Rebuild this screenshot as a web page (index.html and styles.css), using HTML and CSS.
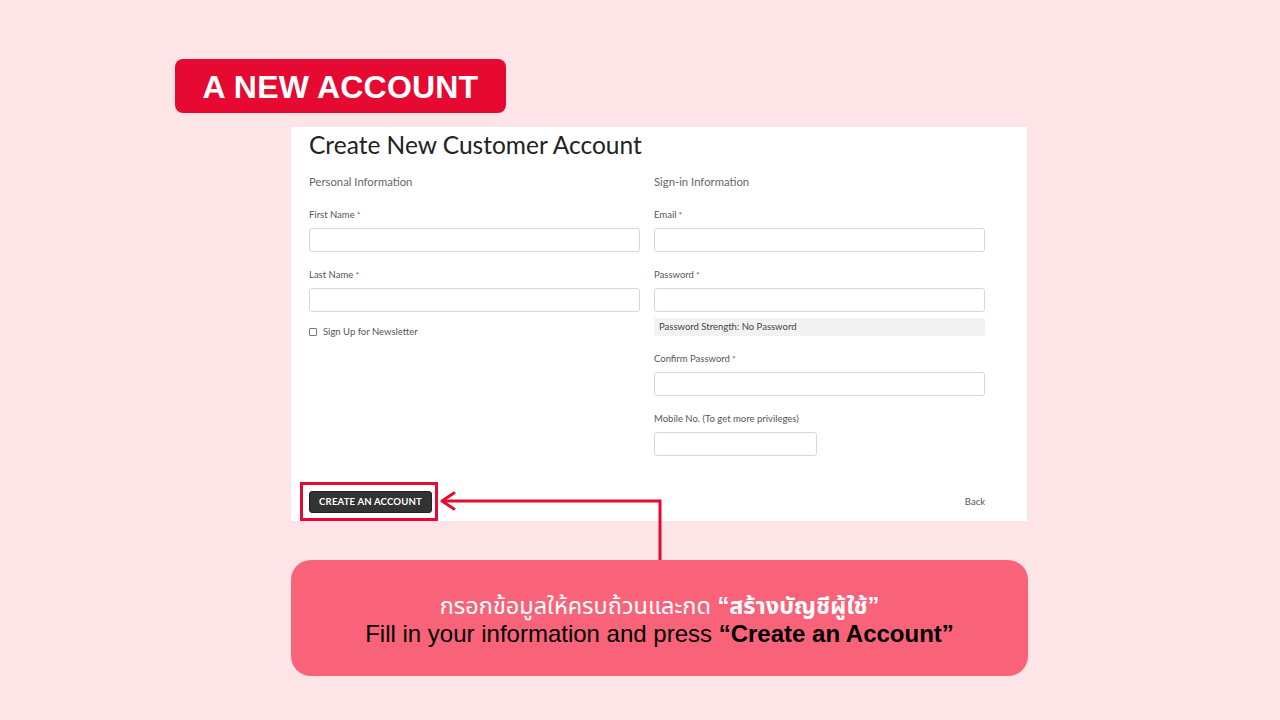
FILE: index.html
```html
<!DOCTYPE html>
<html>
<head>
<meta charset="utf-8">
<link rel="stylesheet" href="styles.css">
</head>
<body>
<div class="page">
  <div class="badge">A NEW ACCOUNT</div>
  <div class="panel">
    <h1 class="title">Create New Customer Account</h1>
    <div class="cols">
      <div class="col">
        <div class="section">Personal Information</div>
        <div class="field">
          <label class="label">First Name <span class="req">*</span></label>
          <div class="input"></div>
        </div>
        <div class="field">
          <label class="label">Last Name <span class="req">*</span></label>
          <div class="input"></div>
        </div>
        <div class="check"><span class="box"></span>Sign Up for Newsletter</div>
      </div>
      <div class="col">
        <div class="section">Sign-in Information</div>
        <div class="field">
          <label class="label">Email <span class="req">*</span></label>
          <div class="input"></div>
        </div>
        <div class="field">
          <label class="label">Password <span class="req">*</span></label>
          <div class="input"></div>
          <div class="strength">Password Strength: No Password</div>
        </div>
        <div class="field">
          <label class="label">Confirm Password <span class="req">*</span></label>
          <div class="input"></div>
        </div>
        <div class="field">
          <label class="label">Mobile No. (To get more privileges)</label>
          <div class="input short"></div>
        </div>
      </div>
    </div>
    <div class="actions">
      <div class="highlight"><div class="btn">CREATE AN ACCOUNT</div></div>
      <div class="back">Back</div>
    </div>
  </div>
  <div class="callout">
    <div class="thai">กรอกข้อมูลให้ครบถ้วนและกด <b>“สร้างบัญชีผู้ใช้”</b></div>
    <div class="eng">Fill in your information and press <b>“Create an Account”</b></div>
  </div>
  <svg class="arrow" width="1280" height="720" viewBox="0 0 1280 720">
    <polyline points="442,501 660,501 660,560" fill="none" stroke="#e60a32" stroke-width="3"/>
    <polyline points="454,493 442,501 454,509" fill="none" stroke="#e60a32" stroke-width="3" stroke-linecap="round" stroke-linejoin="round"/>
  </svg>
</div>
</body>
</html>
```
FILE: styles.css
```css
html, body {
  margin: 0;
  padding: 0;
}
body {
  background: #fce4e7;
  width: 1280px;
  height: 720px;
  overflow: hidden;
}
.page {
  position: relative;
  width: 1280px;
  height: 720px;
  display: flex;
  flex-direction: column;
  align-items: flex-start;
}
.badge {
  margin: 59px 0 0 175px;
  width: 331px;
  height: 54px;
  box-sizing: border-box;
  background: #e60a32;
  border-radius: 8px;
  color: #fff;
  font-family: "Liberation Sans", Arial, sans-serif;
  font-weight: bold;
  font-size: 32px;
  line-height: 56px;
  text-align: center;
  letter-spacing: 0.2px;
}
.panel {
  margin: 14px 0 0 291px;
  width: 736px;
  height: 394px;
  box-sizing: border-box;
  background: #fff;
  padding: 0 42px 0 18px;
  display: flex;
  flex-direction: column;
  font-family: Lato, "Open Sans", sans-serif;
  color: #333;
}
.title {
  margin: 3px 0 0 0;
  font-weight: 400;
  font-size: 24.5px;
  line-height: 30px;
  color: #222;
}
.cols {
  display: flex;
  gap: 14px;
  margin-top: 15px;
}
.col {
  flex: 1;
  display: flex;
  flex-direction: column;
}
.section {
  font-size: 11.3px;
  color: #666;
  line-height: 14px;
  margin-bottom: 20px;
}
.field {
  display: flex;
  flex-direction: column;
  margin-bottom: 17px;
}
.label {
  font-size: 9.5px;
  color: #555;
  line-height: 12px;
  margin-bottom: 7px;
}
.req {
  color: #e02b27;
  font-size: 8px;
}
.input {
  height: 24px;
  box-sizing: border-box;
  border: 1px solid #d8d8d8;
  border-radius: 3px;
  background: #fff;
}
.input.short {
  width: 163px;
}
.strength {
  margin-top: 6px;
  height: 18px;
  background: #f2f2f2;
  border-radius: 2px;
  font-size: 9.5px;
  line-height: 18px;
  color: #444;
  padding-left: 5px;
}
.check {
  display: flex;
  align-items: center;
  font-size: 9.5px;
  line-height: 12px;
  color: #555;
  margin-top: -3px;
}
.box {
  width: 6px;
  height: 6px;
  border: 1px solid #777;
  border-radius: 1px;
  margin-right: 6px;
}
.actions {
  margin-top: auto;
  margin-left: -9px;
  display: flex;
  align-items: center;
  justify-content: space-between;
}
.highlight {
  border: 3px solid #e60a32;
  padding: 6px 3px 5px 6px;
}
.btn {
  width: 123px;
  height: 22px;
  box-sizing: border-box;
  background: #333;
  border: 1px solid #222;
  border-radius: 3px;
  color: #fff;
  font-size: 9.6px;
  font-weight: 700;
  line-height: 20px;
  text-align: center;
  letter-spacing: 0.15px;
}
.back {
  font-size: 9.5px;
  color: #555;
}
.callout {
  margin: 39px 0 0 291px;
  width: 737px;
  height: 116px;
  box-sizing: border-box;
  background: #f9637a;
  border-radius: 20px;
  display: flex;
  flex-direction: column;
  align-items: center;
  justify-content: center;
  padding-top: 3px;
}
.thai {
  color: #fff;
  font-family: "Liberation Sans", "Noto Sans Thai", "DejaVu Sans", sans-serif;
  font-size: 23.5px;
  line-height: 28px;
}
.thai b {
  font-weight: bold;
}
.eng {
  color: #000;
  font-family: "Liberation Sans", Arial, sans-serif;
  font-size: 24px;
  line-height: 28px;
}
.arrow {
  position: absolute;
  left: 0;
  top: 0;
  pointer-events: none;
}
```
